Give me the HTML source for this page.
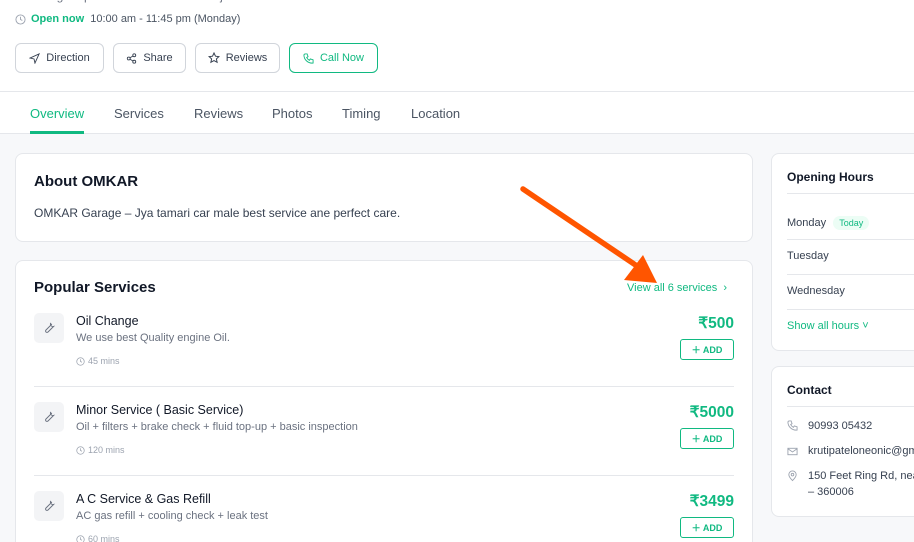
<!DOCTYPE html>
<html><head><meta charset="utf-8"><style>
*{box-sizing:border-box;margin:0;padding:0}
html,body{width:914px;height:542px;overflow:hidden}
body{background:#f7f8fa;font-family:"Liberation Sans",sans-serif;color:#111827;position:relative}
.top{position:absolute;left:0;top:0;width:914px;height:134px;background:#fff;border-bottom:1px solid #e5e7eb}
.abs{position:absolute}
.btn{position:absolute;top:43px;height:30px;border:1px solid #d1d5db;border-radius:6px;font-size:11px;color:#374151;display:flex;align-items:center;justify-content:center;gap:6px}
.tab{position:absolute;top:106px;font-size:13px;color:#4b5563}
.card{position:absolute;background:#fff;border:1px solid #e5e7eb;border-radius:8px}
.ibox{position:absolute;left:34px;width:30px;height:30px;background:#f3f4f6;border-radius:5px;display:flex;align-items:center;justify-content:center}
.t{position:absolute;left:76px;font-size:12.5px;color:#111827}
.d{position:absolute;left:76px;font-size:11px;color:#6b7280}
.m{position:absolute;left:76px;font-size:9px;color:#9ca3af;display:flex;align-items:center;gap:3px}
.p{position:absolute;right:180px;font-size:15.5px;font-weight:bold;color:#10b981}
.add{position:absolute;left:680px;width:54px;height:21px;border:1px solid #10b981;border-radius:3px;color:#10b981;font-size:9px;font-weight:bold;display:flex;align-items:center;justify-content:center}
.sep{position:absolute;left:34px;width:700px;height:1px;background:#e5e7eb}
.rl{position:absolute;left:787px;font-size:11px;color:#374151}
.rsep{position:absolute;left:787px;width:130px;height:1px;background:#e5e7eb}
</style></head><body>
<div class="top">
 <div class="abs" style="left:30px;top:-11px;font-size:12px;color:#6b7280">Garage repair and car service in Rajkot</div>
 <svg class="abs" style="left:15px;top:14px" width="11" height="11" viewBox="0 0 12 12"><circle cx="6" cy="6" r="5" fill="none" stroke="#9ca3af"/><path d="M6 3v3l2 1" fill="none" stroke="#9ca3af"/></svg>
 <div class="abs" style="left:31px;top:13px;font-size:11px"><b style="color:#10b981">Open now</b> <span style="color:#4b5563;margin-left:3px">10:00 am - 11:45 pm (Monday)</span></div>
 <div class="btn" style="left:15px;width:89px"><svg width="11" height="11" viewBox="0 0 12 12"><path d="M11 1L1 5.5l4.5 1L6.5 11z" fill="none" stroke="#374151"/></svg>Direction</div>
 <div class="btn" style="left:113px;width:73px"><svg width="11" height="11" viewBox="0 0 12 12"><circle cx="9" cy="2.5" r="1.6" fill="none" stroke="#374151"/><circle cx="3" cy="6" r="1.6" fill="none" stroke="#374151"/><circle cx="9" cy="9.5" r="1.6" fill="none" stroke="#374151"/><path d="M4.4 5.2l3.2-1.9M4.4 6.8l3.2 1.9" stroke="#374151"/></svg>Share</div>
 <div class="btn" style="left:195px;width:85px"><svg width="12" height="12" viewBox="0 0 12 12"><path d="M6 1l1.5 3.2 3.4.4-2.5 2.3.7 3.4L6 8.6 2.9 10.3l.7-3.4L1.1 4.6l3.4-.4z" fill="none" stroke="#374151"/></svg>Reviews</div>
 <div class="btn" style="left:289px;width:89px;border-color:#10b981;color:#10b981"><svg width="11" height="11" viewBox="0 0 12 12"><path d="M2 1h2.5l1 3-1.5 1a7 7 0 003 3l1-1.5 3 1V11A9 9 0 011 2z" fill="none" stroke="#10b981"/></svg>Call Now</div>
 <div class="abs" style="left:0;top:91px;width:914px;height:1px;background:#e5e7eb"></div>
 <div class="tab" style="left:30px;color:#10b981">Overview</div>
 <div class="abs" style="left:30px;top:131px;width:54px;height:3px;background:#10b981"></div>
 <div class="tab" style="left:114px">Services</div>
 <div class="tab" style="left:194px">Reviews</div>
 <div class="tab" style="left:272px">Photos</div>
 <div class="tab" style="left:342px">Timing</div>
 <div class="tab" style="left:411px">Location</div>
</div>

<div class="card" style="left:15px;top:153px;width:738px;height:89px">
 <div class="abs" style="left:18px;top:19px;font-size:15px;font-weight:bold">About OMKAR</div>
 <div class="abs" style="left:18px;top:52px;font-size:12px;color:#374151">OMKAR Garage – Jya tamari car male best service ane perfect care.</div>
</div>

<div class="card" style="left:15px;top:260px;width:738px;height:300px"></div>
<div class="abs" style="left:34px;top:279px;font-size:15px;font-weight:bold">Popular Services</div>
<div class="abs" style="left:627px;top:282px;font-size:11px;color:#10b981">View all 6 services &nbsp;›</div>

<div class="ibox" style="top:313px"><svg width="12" height="12" viewBox="0 0 12 12"><path d="M7.5 1.5a2.5 2.5 0 003 3L5 10a1.2 1.2 0 01-2-2l5.5-5.5z" fill="none" stroke="#6b7280"/></svg></div>
<div class="t" style="top:314px">Oil Change</div>
<div class="d" style="top:332px">We use best Quality engine Oil.</div>
<div class="m" style="top:356px"><svg width="9" height="9" viewBox="0 0 12 12"><circle cx="6" cy="6" r="5" fill="none" stroke="#9ca3af"/><path d="M6 3v3l2 1" fill="none" stroke="#9ca3af"/></svg>45 mins</div>
<div class="p" style="top:314px">₹500</div>
<div class="add" style="top:339px">＋ ADD</div>
<div class="sep" style="top:386px"></div>

<div class="ibox" style="top:402px"><svg width="12" height="12" viewBox="0 0 12 12"><path d="M7.5 1.5a2.5 2.5 0 003 3L5 10a1.2 1.2 0 01-2-2l5.5-5.5z" fill="none" stroke="#6b7280"/></svg></div>
<div class="t" style="top:403px">Minor Service ( Basic Service)</div>
<div class="d" style="top:421px">Oil + filters + brake check + fluid top-up + basic inspection</div>
<div class="m" style="top:445px"><svg width="9" height="9" viewBox="0 0 12 12"><circle cx="6" cy="6" r="5" fill="none" stroke="#9ca3af"/><path d="M6 3v3l2 1" fill="none" stroke="#9ca3af"/></svg>120 mins</div>
<div class="p" style="top:403px">₹5000</div>
<div class="add" style="top:428px">＋ ADD</div>
<div class="sep" style="top:475px"></div>

<div class="ibox" style="top:491px"><svg width="12" height="12" viewBox="0 0 12 12"><path d="M7.5 1.5a2.5 2.5 0 003 3L5 10a1.2 1.2 0 01-2-2l5.5-5.5z" fill="none" stroke="#6b7280"/></svg></div>
<div class="t" style="top:492px">A C Service &amp; Gas Refill</div>
<div class="d" style="top:510px">AC gas refill + cooling check + leak test</div>
<div class="m" style="top:534px"><svg width="9" height="9" viewBox="0 0 12 12"><circle cx="6" cy="6" r="5" fill="none" stroke="#9ca3af"/><path d="M6 3v3l2 1" fill="none" stroke="#9ca3af"/></svg>60 mins</div>
<div class="p" style="top:492px">₹3499</div>
<div class="add" style="top:517px">＋ ADD</div>

<div class="card" style="left:771px;top:153px;width:160px;height:198px"></div>
<div class="abs" style="left:787px;top:170px;font-size:12px;font-weight:bold">Opening Hours</div>
<div class="rsep" style="top:193px"></div>
<div class="rl" style="top:216px">Monday <span style="display:inline-block;margin-left:4px;background:#ecfdf5;color:#10b981;font-size:9px;padding:2px 6px;border-radius:8px">Today</span></div>
<div class="rsep" style="top:239px"></div>
<div class="rl" style="top:250px">Tuesday</div>
<div class="rsep" style="top:274px"></div>
<div class="rl" style="top:285px">Wednesday</div>
<div class="rsep" style="top:309px"></div>
<div class="rl" style="top:320px;color:#10b981">Show all hours ˅</div>

<div class="card" style="left:771px;top:366px;width:160px;height:151px"></div>
<div class="abs" style="left:787px;top:383px;font-size:12px;font-weight:bold">Contact</div>
<div class="rsep" style="top:406px"></div>
<svg class="abs" style="left:787px;top:420px" width="11" height="11" viewBox="0 0 12 12"><path d="M2 1h2.5l1 3-1.5 1a7 7 0 003 3l1-1.5 3 1V11A9 9 0 011 2z" fill="none" stroke="#9ca3af"/></svg>
<div class="rl" style="left:808px;top:420px">90993 05432</div>
<svg class="abs" style="left:787px;top:446px" width="11" height="11" viewBox="0 0 12 12"><rect x="1" y="2.5" width="10" height="7" fill="none" stroke="#9ca3af"/><path d="M1 3l5 3.5L11 3" fill="none" stroke="#9ca3af"/></svg>
<div class="rl" style="left:808px;top:445px">krutipateloneonic@gmail.com</div>
<svg class="abs" style="left:787px;top:470px" width="11" height="12" viewBox="0 0 12 12"><path d="M6 11S2 7 2 4.5a4 4 0 018 0C10 7 6 11 6 11z" fill="none" stroke="#9ca3af"/><circle cx="6" cy="4.5" r="1.4" fill="none" stroke="#9ca3af"/></svg>
<div class="rl" style="left:808px;top:470px;white-space:nowrap">150 Feet Ring Rd, near</div>
<div class="rl" style="left:808px;top:486px">– 360006</div>

<svg class="abs" style="left:0;top:0" width="914" height="542"><line x1="523" y1="189" x2="637" y2="266" stroke="#ff5500" stroke-width="5.5" stroke-linecap="round"/><polygon points="624,280 643,255 657,283" fill="#ff5500"/></svg>
</body></html>
